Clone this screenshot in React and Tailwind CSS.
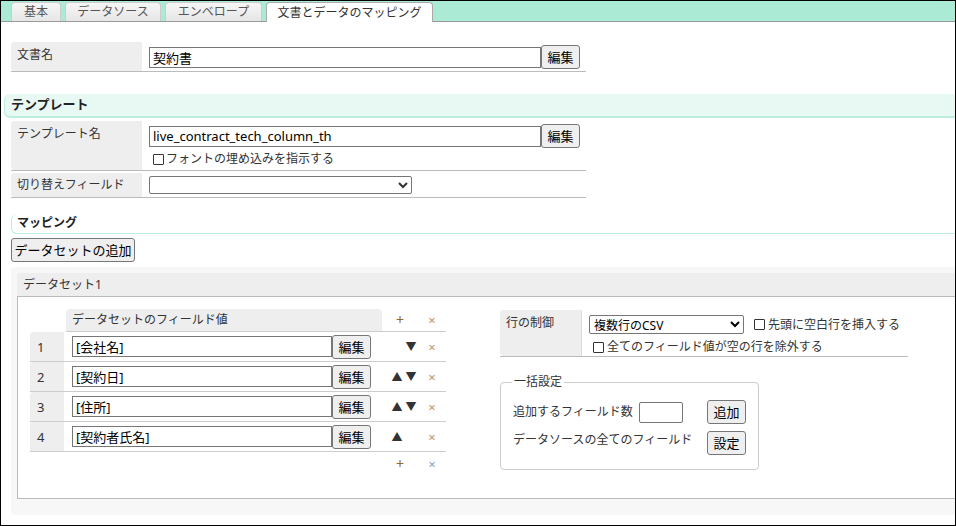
import React from "react";

const Check = () => (
  <span className="inline-block w-[11px] h-[11px] border border-[#333] rounded-[1px] bg-white shrink-0" />
);

const EditButton = ({ children = "編集", className = "" }) => (
  <button
    type="button"
    className={`h-[24px] w-[39px] border border-[#767676] rounded-[3px] bg-[#efefef] text-[13px] leading-[20px] text-black ${className}`}
  >
    {children}
  </button>
);

const Tab = ({ label, active, width }) => (
  <div
    className={`${width} h-[19px] flex items-center justify-center rounded-t-[4px] border border-b-0 text-[12px] leading-[16px] ${
      active
        ? "bg-white border-[#aaa] text-[#333] h-[20px] -mb-[1px]"
        : "bg-gradient-to-b from-[#f6f6f6] to-[#e6e6e6] border-[#ccc] text-[#555]"
    }`}
  >
    {label}
  </div>
);

const fields = [
  { no: 1, name: "[会社名]", up: false, down: true },
  { no: 2, name: "[契約日]", up: true, down: true },
  { no: 3, name: "[住所]", up: true, down: true },
  { no: 4, name: "[契約者氏名]", up: true, down: false },
];

export default function App() {
  return (
    <div className="w-[956px] h-[526px] border border-black bg-white overflow-hidden text-[12px] leading-[16px] text-[#333] font-['Noto_Sans','Noto_Sans_CJK_JP',sans-serif]">
      {/* tab bar */}
      <div className="h-[21px] bg-[#abebd5] border-b border-[#999] flex items-end pl-[10px] gap-[4px]">
        <Tab label="基本" width="w-[50px]" />
        <Tab label="データソース" width="w-[96px]" />
        <Tab label="エンベロープ" width="w-[97px]" />
        <Tab label="文書とデータのマッピング" width="w-[167px]" active />
      </div>

      <div className="w-[1000px] pl-[3px]">
        {/* document name */}
        <div className="ml-[7px] mt-[20px] w-[575px] flex border-b border-[#bbb]">
          <div className="w-[131px] h-[29px] bg-[#eee] rounded-tl-[3px] rounded-bl-[4px] pl-[6px] pt-[5px]">文書名</div>
          <div className="pl-[7px] pt-[3px] flex items-center h-[27px]">
            <input
              readOnly
              value="契約書"
              className="w-[392px] h-[21px] border border-[#767676] px-[3px] text-[13px] text-black"
            />
            <EditButton />
          </div>
        </div>

        {/* template heading */}
        <div className="mt-[22px] h-[24px] bg-[#e8f8f2] border-l border-b-2 border-[#bdeedd] rounded-l-[6px] pl-[6px] font-bold text-[13px] leading-[21px] text-[#222]">
          テンプレート
        </div>

        <div className="ml-[7px] mt-[3px] w-[575px]">
          <div className="flex border-b border-[#bbb]">
            <div className="w-[131px] h-[49px] bg-[#eee] rounded-tl-[3px] rounded-bl-[4px] pl-[6px] pt-[5px]">テンプレート名</div>
            <div className="pl-[7px] pt-[3px]">
              <div className="flex items-center">
                <input
                  readOnly
                  value="live_contract_tech_column_th"
                  className="w-[392px] h-[21px] border border-[#767676] px-[3px] text-[13px] text-black"
                />
                <EditButton />
              </div>
              <label className="flex items-center gap-[2px] pl-[4px] mt-[3px] text-[12px]">
                <Check />
                フォントの埋め込みを指示する
              </label>
            </div>
          </div>
          <div className="flex border-b border-[#bbb] mt-[2px]">
            <div className="w-[131px] h-[24px] bg-[#eee] rounded-tl-[3px] rounded-bl-[4px] pl-[6px] pt-[4px]">切り替えフィールド</div>
            <div className="pl-[7px] pt-[3px]">
              <select className="w-[263px] h-[18px] border border-[#767676] rounded-[2px] bg-white text-[12px]">
                <option></option>
              </select>
            </div>
          </div>
        </div>

        {/* mapping heading */}
        <div className="ml-[7px] mt-[16px] h-[20px] border-l border-b border-[#bdeedd] rounded-l-[6px] pl-[5px] font-bold text-[12px] leading-[18px] text-[#222]">
          マッピング
        </div>

        <button
          type="button"
          className="ml-[7px] mt-[4px] w-[124px] h-[24px] border border-[#767676] rounded-[3px] bg-[#efefef] text-[13px] text-black leading-[20px]"
        >
          データセットの追加
        </button>

        {/* dataset */}
        <div className="ml-[7px] mt-[5px] bg-[#f7f7f7] rounded-[4px] pt-[6px] pl-[6px] pb-[16px]">
          <div className="h-[24px] bg-[#eee] border-b border-[#bbb] rounded-tl-[3px] pl-[6px] leading-[23px] text-[12px]">
            データセット1
          </div>
          <div className="h-[202px] bg-white border-l border-b border-[#bbb] pl-[12px] pt-[12px] flex">
            {/* field table */}
            <div className="w-[416px]">
              <div className="flex h-[23px]">
                <div className="w-[36px]" />
                <div className="flex flex-1 border-b border-[#ccc]">
                  <div className="w-[316px] bg-[#eee] rounded-t-[4px] pl-[6px] leading-[21px] text-[12px]">
                    データセットのフィールド値
                  </div>
                  <div className="w-[36px] text-center text-[#8a6a2a] text-[14px] leading-[22px]">+</div>
                  <div className="w-[28px] text-center text-[#c0956a] text-[13px] leading-[22px]">×</div>
                </div>
              </div>
              {fields.map((f) => (
                <div key={f.no} className="flex h-[30px] border-b border-[#ccc]">
                  <div className="w-[34px] bg-[#eee] rounded-tl-[3px] pl-[7px] flex items-center text-[13px]">{f.no}</div>
                  <div className="w-[2px]" />
                  <div className="w-[316px] pl-[6px] flex items-center">
                    <input
                      readOnly
                      value={f.name}
                      className="w-[260px] h-[21px] border border-[#767676] px-[3px] text-[13px] text-black"
                    />
                    <EditButton />
                  </div>
                  <div className="w-[36px] pl-[8px] flex items-center text-[11px] text-[#333]">
                    <span className="w-[14px] text-center">{f.up ? "▲" : ""}</span>
                    <span className="w-[14px] text-center">{f.down ? "▼" : ""}</span>
                  </div>
                  <div className="w-[28px] flex items-center justify-center text-[#c0956a] text-[13px]">×</div>
                </div>
              ))}
              <div className="flex h-[24px]">
                <div className="w-[352px]" />
                <div className="w-[36px] text-center text-[#8a6a2a] text-[14px] leading-[24px]">+</div>
                <div className="w-[28px] text-center text-[#7fa3c8] text-[13px] leading-[24px]">×</div>
              </div>
            </div>

            {/* right side */}
            <div className="ml-[54px] mt-[1px]">
              <div className="w-[408px] flex border-b border-[#bbb]">
                <div className="w-[82px] h-[46px] bg-[#eee] rounded-tl-[3px] rounded-bl-[4px] pl-[6px] pt-[5px] border-r border-[#ddd]">
                  行の制御
                </div>
                <div className="pl-[7px] pt-[5px]">
                  <div className="flex items-center">
                    <select className="w-[155px] h-[19px] border border-[#767676] rounded-[2px] bg-white text-[12px] text-black">
                      <option>複数行のCSV</option>
                    </select>
                    <label className="flex items-center gap-[3px] ml-[10px]">
                      <Check />
                      先頭に空白行を挿入する
                    </label>
                  </div>
                  <label className="flex items-center gap-[3px] pl-[4px] mt-[5px]">
                    <Check />
                    全てのフィールド値が空の行を除外する
                  </label>
                </div>
              </div>

              <fieldset className="mt-[17px] w-[259px] border border-[#ccc] rounded-[4px] px-[12px] pt-[10px] pb-[14px]">
                <legend className="px-[2px] -ml-[1px] text-[12px]">一括設定</legend>
                <div className="flex items-center">
                  <span className="w-[126px]">追加するフィールド数</span>
                  <input readOnly className="w-[44px] h-[21px] border border-[#767676] rounded-[2px]" />
                  <EditButton className="ml-[24px] h-[23px]">追加</EditButton>
                </div>
                <div className="flex mt-[7px]">
                  <span className="w-[194px] pt-[1px]">データソースの全てのフィールド</span>
                  <EditButton className="h-[23px]">設定</EditButton>
                </div>
              </fieldset>
            </div>
          </div>
        </div>
      </div>
    </div>
  );
}
